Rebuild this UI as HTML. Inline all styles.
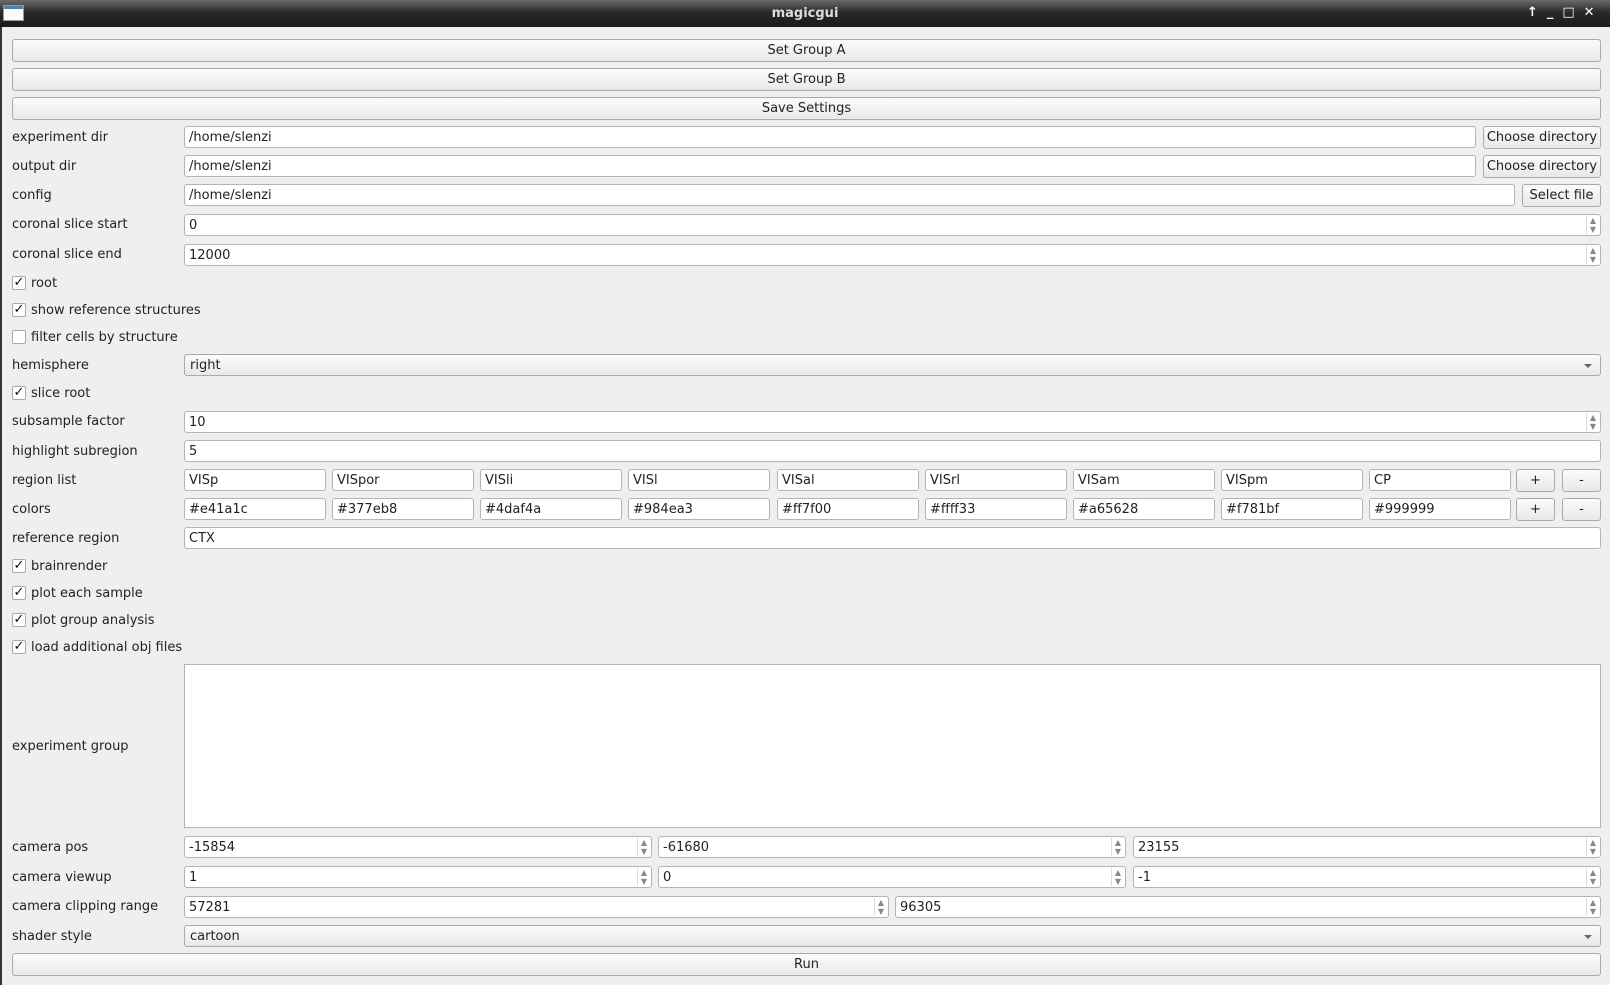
<!DOCTYPE html>
<html><head><style>
*{box-sizing:border-box;margin:0;padding:0}
body{width:1610px;height:985px;background:#efefef;font-family:"DejaVu Sans","Liberation Sans",sans-serif;font-size:13px;color:#222;position:relative;overflow:hidden}
.t{position:absolute;left:0;top:0;width:1610px;height:27px;background:linear-gradient(#6a6a6a,#2a2a2a 45%,#1a1a1a);color:#ddd;font-weight:bold;text-align:center;line-height:27px;font-size:13px}
.ed{position:absolute;left:0;top:27px;width:2px;height:958px;background:#333}
.w{position:absolute;left:0;top:1px;width:1610px;height:984px}
.a{position:absolute}
.b{position:absolute;height:23px;border:1px solid #aaa;border-radius:3px;background:linear-gradient(#fbfbfb,#e8e8e8);text-align:center;line-height:22px}
.f{position:absolute;height:22px;border:1px solid #b4b4b4;border-radius:3px;background:#fff;line-height:21px;padding-left:4px}
.l{position:absolute;left:12px;line-height:17px}
.ar{position:absolute;right:1px;top:1px;width:13px;height:18px;border-left:1px solid #ddd;font-size:8px;line-height:9px;color:#888;text-align:center}
.cb{position:absolute;left:12px;width:14px;height:14px;border:1px solid #aaa;border-radius:2px;background:#fff;font-size:13px;line-height:12px;text-align:center;font-weight:bold;color:#111}
.cl{position:absolute;left:31px;line-height:17px}
.co{position:absolute;height:22px;border:1px solid #aaa;border-radius:3px;background:linear-gradient(#fbfbfb,#e8e8e8);line-height:21px;padding-left:5px}
.co::after{content:"";position:absolute;right:8px;top:9px;border-left:4px solid transparent;border-right:4px solid transparent;border-top:4px solid #666}
</style></head><body>
<div class="t">magicgui</div>
<div class="a" style="left:3px;top:5px;width:21px;height:16px;background:linear-gradient(#4a7fc0 0 3px,#fafafa 3px);border:1px solid #999"></div>
<div class="a" style="left:1527px;top:5px;color:#fff;font-size:13px;letter-spacing:9px;font-weight:bold">↑_□✕</div>
<div class="ed"></div>
<div class="w">
<div class="b" style="left:12px;top:38px;width:1589px">Set Group A</div>
<div class="b" style="left:12px;top:67px;width:1589px">Set Group B</div>
<div class="b" style="left:12px;top:96px;width:1589px">Save Settings</div>

<div class="l" style="top:128px">experiment dir</div>
<div class="f" style="left:184px;top:125px;width:1292px">/home/slenzi</div>
<div class="b" style="left:1483px;top:125px;width:118px">Choose directory</div>

<div class="l" style="top:157px">output dir</div>
<div class="f" style="left:184px;top:154px;width:1292px">/home/slenzi</div>
<div class="b" style="left:1483px;top:154px;width:118px">Choose directory</div>

<div class="l" style="top:186px">config</div>
<div class="f" style="left:184px;top:183px;width:1331px">/home/slenzi</div>
<div class="b" style="left:1522px;top:183px;width:79px">Select file</div>

<div class="l" style="top:215px">coronal slice start</div>
<div class="f" style="left:184px;top:213px;width:1417px">0<span class="ar">▲<br>▼</span></div>
<div class="l" style="top:245px">coronal slice end</div>
<div class="f" style="left:184px;top:243px;width:1417px">12000<span class="ar">▲<br>▼</span></div>

<div class="cb" style="top:275px">✓</div><div class="cl" style="top:274px">root</div>
<div class="cb" style="top:302px">✓</div><div class="cl" style="top:301px">show reference structures</div>
<div class="cb" style="top:329px"></div><div class="cl" style="top:328px">filter cells by structure</div>

<div class="l" style="top:356px">hemisphere</div>
<div class="co" style="left:184px;top:353px;width:1417px">right</div>

<div class="cb" style="top:385px">✓</div><div class="cl" style="top:384px">slice root</div>

<div class="l" style="top:412px">subsample factor</div>
<div class="f" style="left:184px;top:410px;width:1417px">10<span class="ar">▲<br>▼</span></div>
<div class="l" style="top:442px">highlight subregion</div>
<div class="f" style="left:184px;top:439px;width:1417px">5</div>

<div class="l" style="top:471px">region list</div>
<div class="f" style="left:184px;top:468px;width:142px">VISp</div>
<div class="f" style="left:332px;top:468px;width:142px">VISpor</div>
<div class="f" style="left:480px;top:468px;width:142px">VISli</div>
<div class="f" style="left:628px;top:468px;width:142px">VISl</div>
<div class="f" style="left:777px;top:468px;width:142px">VISal</div>
<div class="f" style="left:925px;top:468px;width:142px">VISrl</div>
<div class="f" style="left:1073px;top:468px;width:142px">VISam</div>
<div class="f" style="left:1221px;top:468px;width:142px">VISpm</div>
<div class="f" style="left:1369px;top:468px;width:142px">CP</div>
<div class="b" style="left:1516px;top:468px;width:39px">+</div>
<div class="b" style="left:1562px;top:468px;width:39px">-</div>

<div class="l" style="top:500px">colors</div>
<div class="f" style="left:184px;top:497px;width:142px">#e41a1c</div>
<div class="f" style="left:332px;top:497px;width:142px">#377eb8</div>
<div class="f" style="left:480px;top:497px;width:142px">#4daf4a</div>
<div class="f" style="left:628px;top:497px;width:142px">#984ea3</div>
<div class="f" style="left:777px;top:497px;width:142px">#ff7f00</div>
<div class="f" style="left:925px;top:497px;width:142px">#ffff33</div>
<div class="f" style="left:1073px;top:497px;width:142px">#a65628</div>
<div class="f" style="left:1221px;top:497px;width:142px">#f781bf</div>
<div class="f" style="left:1369px;top:497px;width:142px">#999999</div>
<div class="b" style="left:1516px;top:497px;width:39px">+</div>
<div class="b" style="left:1562px;top:497px;width:39px">-</div>

<div class="l" style="top:529px">reference region</div>
<div class="f" style="left:184px;top:526px;width:1417px">CTX</div>

<div class="cb" style="top:558px">✓</div><div class="cl" style="top:557px">brainrender</div>
<div class="cb" style="top:585px">✓</div><div class="cl" style="top:584px">plot each sample</div>
<div class="cb" style="top:612px">✓</div><div class="cl" style="top:611px">plot group analysis</div>
<div class="cb" style="top:639px">✓</div><div class="cl" style="top:638px">load additional obj files</div>

<div class="l" style="top:737px">experiment group</div>
<div class="f" style="left:184px;top:663px;width:1417px;height:164px;border-radius:0"></div>

<div class="l" style="top:838px">camera pos</div>
<div class="f" style="left:184px;top:835px;width:468px">-15854<span class="ar">▲<br>▼</span></div>
<div class="f" style="left:658px;top:835px;width:468px">-61680<span class="ar">▲<br>▼</span></div>
<div class="f" style="left:1133px;top:835px;width:468px">23155<span class="ar">▲<br>▼</span></div>

<div class="l" style="top:868px">camera viewup</div>
<div class="f" style="left:184px;top:865px;width:468px">1<span class="ar">▲<br>▼</span></div>
<div class="f" style="left:658px;top:865px;width:468px">0<span class="ar">▲<br>▼</span></div>
<div class="f" style="left:1133px;top:865px;width:468px">-1<span class="ar">▲<br>▼</span></div>

<div class="l" style="top:897px">camera clipping range</div>
<div class="f" style="left:184px;top:895px;width:705px">57281<span class="ar">▲<br>▼</span></div>
<div class="f" style="left:895px;top:895px;width:706px">96305<span class="ar">▲<br>▼</span></div>

<div class="l" style="top:927px">shader style</div>
<div class="co" style="left:184px;top:924px;width:1417px">cartoon</div>

<div class="b" style="left:12px;top:952px;width:1589px">Run</div>
</div>
</body></html>
